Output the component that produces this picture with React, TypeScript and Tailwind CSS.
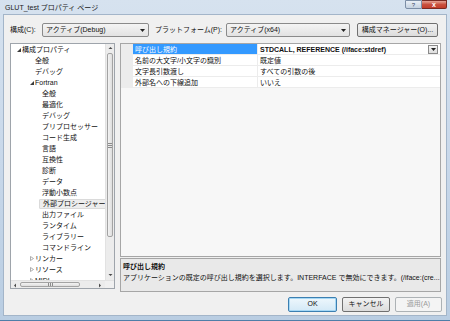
import React from 'react';

const font = "font-[family-name:'Liberation_Sans','Noto_Sans_CJK_JP',sans-serif]";

type Node = { l: number; t: string; a?: 'open' | 'closed'; sel?: boolean };

const tree: Node[] = [
  { l: 0, t: '構成プロパティ', a: 'open' },
  { l: 1, t: '全般' },
  { l: 1, t: 'デバッグ' },
  { l: 1, t: 'Fortran', a: 'open' },
  { l: 2, t: '全般' },
  { l: 2, t: '最適化' },
  { l: 2, t: 'デバッグ' },
  { l: 2, t: 'プリプロセッサー' },
  { l: 2, t: 'コード生成' },
  { l: 2, t: '言語' },
  { l: 2, t: '互換性' },
  { l: 2, t: '診断' },
  { l: 2, t: 'データ' },
  { l: 2, t: '浮動小数点' },
  { l: 2, t: '外部プロシージャー', sel: true },
  { l: 2, t: '出力ファイル' },
  { l: 2, t: 'ランタイム' },
  { l: 2, t: 'ライブラリー' },
  { l: 2, t: 'コマンドライン' },
  { l: 1, t: 'リンカー', a: 'closed' },
  { l: 1, t: 'リソース', a: 'closed' },
  { l: 1, t: 'MIDL', a: 'closed' },
];

const indent = ['pl-[6px]', 'pl-[19px]', 'pl-[31px]'];

const props = [
  { name: '呼び出し規約', value: 'STDCALL, REFERENCE (/iface:stdref)', active: true },
  { name: '名前の大文字/小文字の識別', value: '既定値' },
  { name: '文字長引数渡し', value: 'すべての引数の後' },
  { name: '外部名への下線追加', value: 'いいえ' },
];

const Arrow = ({ kind }: { kind?: 'open' | 'closed' }) => (
  <span className="w-[5px] h-[5px] shrink-0 flex items-center">
    {kind === 'open' && (
      <svg width="4" height="4" viewBox="0 0 4 4">
        <polygon points="4,0 4,4 0,4" fill="#3c3c3c" />
      </svg>
    )}
    {kind === 'closed' && (
      <svg width="4" height="5" viewBox="0 0 4 5">
        <polygon points="0.5,0.5 3.5,2.5 0.5,4.5" fill="none" stroke="#9a9a9a" strokeWidth="0.8" />
      </svg>
    )}
  </span>
);

const Caret = () => (
  <svg width="5" height="3" viewBox="0 0 5 3">
    <polygon points="0,0 5,0 2.5,3" fill="#222" />
  </svg>
);

const Combo = ({ text, w }: { text: string; w: string }) => (
  <div className={`${w} h-[14px] flex items-center justify-between pl-[3px] pr-[3px] border border-[#8a8a8a] rounded-[2px] bg-gradient-to-b from-[#f4f4f4] to-[#e2e2e2]`}>
    <span>{text}</span>
    <Caret />
  </div>
);

const Grip = ({ vertical }: { vertical?: boolean }) => (
  <div className={`flex ${vertical ? 'flex-col gap-[1px]' : 'flex-row gap-[1px]'}`}>
    {[0, 1, 2].map((i) => (
      <div key={i} className={vertical ? 'w-[4px] h-[1px] bg-[#8c8c8c]' : 'w-[1px] h-[3px] bg-[#8c8c8c]'} />
    ))}
  </div>
);

const ScrollArrow = ({ dir }: { dir: 'up' | 'down' | 'left' | 'right' }) => {
  const pts = {
    up: '0.5,3 2.5,1 4.5,3',
    down: '0.5,1 2.5,3 4.5,1',
    left: '3,0.5 1,2.5 3,4.5',
    right: '1,0.5 3,2.5 1,4.5',
  }[dir];
  return (
    <div className="w-[9px] h-[9px] flex items-center justify-center">
      <svg width="5" height="5" viewBox="0 0 5 5">
        <polygon points={pts} fill="#4a4a4a" />
      </svg>
    </div>
  );
};

export default function App() {
  return (
    <div className={`w-[450px] h-[321px] flex flex-col overflow-hidden bg-gradient-to-b from-[#d6e2ef] via-[#c8d8ea] to-[#b9cde2] border-b border-[#4f7ea8] text-[7px] text-[#111] ${font}`}>
      {/* title bar */}
      <div className="h-[14px] flex items-start justify-between pl-[5px] pr-[3px]">
        <span className="leading-[15px] text-[#1a1a1a]">GLUT_test プロパティ ページ</span>
        <div className="flex">
          <div className="w-[17px] h-[9px] flex items-center justify-center border border-[#7c8ea6] rounded-bl-[2px] bg-gradient-to-b from-[#e9eff6] to-[#c4d1e0] text-[6px] leading-none text-[#34485e]">?</div>
          <div className="w-[25px] h-[9px] flex items-center justify-center border border-l-0 border-[#7a2a22] rounded-br-[2px] bg-gradient-to-b from-[#e4a295] via-[#c9503e] to-[#c23c2a] text-[7px] leading-none font-bold text-white">x</div>
        </div>
      </div>

      {/* client area */}
      <div className="flex-1 mx-[3px] mb-[4px] flex flex-col bg-[#f0f0f0] border border-[#a3b5c9] pl-[6px] pr-[4px]">
        <div className="h-[14px] mt-[8px] flex items-center">
          <span className="w-[32px]">構成(C):</span>
          <Combo text="アクティブ(Debug)" w="w-[107px]" />
          <span className="ml-[6px] w-[71px]">プラットフォーム(P):</span>
          <Combo text="アクティブ(x64)" w="w-[124px]" />
          <div className="ml-[7px] w-[81px] h-[14px] flex items-center justify-center border border-[#707070] rounded-[2px] bg-gradient-to-b from-[#f2f2f2] to-[#dcdcdc]">
            構成マネージャー(O)...
          </div>
        </div>

        <div className="mt-[6px] flex gap-[5px]">
          {/* tree */}
          <div className="w-[105px] h-[246px] flex flex-col border border-[#9ea4ab] bg-white">
            <div className="flex-1 flex min-h-0">
              <div className="flex-1 min-w-0 flex flex-col overflow-hidden">
                {tree.map((n, i) => (
                  <div key={i} className={`h-[11px] shrink-0 flex items-center leading-[11px] whitespace-nowrap overflow-hidden ${indent[n.l]}`}>
                    {n.l < 2 && <Arrow kind={n.a} />}
                    {n.sel ? (
                      <span className="-ml-[3px] pl-[3px] flex-1 h-[10px] bg-[#ededed] border border-[#dadada] rounded-[1px] leading-[8px] whitespace-nowrap">{n.t}</span>
                    ) : (
                      <span>{n.t}</span>
                    )}
                  </div>
                ))}
              </div>
              <div className="w-[9px] shrink-0 flex flex-col bg-[#ececec] border-l border-[#e2e2e2]">
                <ScrollArrow dir="up" />
                <div className="h-[184px] mx-[1px] flex items-center justify-center border border-[#a3a3a3] rounded-[2px] bg-gradient-to-r from-[#f3f3f3] to-[#dedede]">
                  <Grip vertical />
                </div>
                <div className="flex-1" />
                <ScrollArrow dir="down" />
              </div>
            </div>
            <div className="h-[8px] shrink-0 flex bg-[#ececec] border-t border-[#e2e2e2]">
              <div className="h-[8px] flex items-center"><ScrollArrow dir="left" /></div>
              <div className="w-[60px] my-[1px] flex items-center justify-center border border-[#a3a3a3] rounded-[2px] bg-gradient-to-b from-[#f3f3f3] to-[#dedede]">
                <Grip />
              </div>
              <div className="flex-1" />
              <div className="h-[8px] flex items-center"><ScrollArrow dir="right" /></div>
              <div className="w-[9px] bg-[#f0f0f0]" />
            </div>
          </div>

          {/* property grid + description */}
          <div className="w-[321px] flex flex-col gap-[1px]">
            <div className="h-[214px] border border-[#a6a6a6] bg-[#f7f7f7] flex flex-col">
              {props.map((p, i) => (
                <div key={i} className="h-[11px] flex leading-[11px]">
                  <div className="w-[12px] bg-[#ececec]" />
                  <div className={`w-[124px] pl-[2px] border-b border-[#ececec] ${p.active ? 'bg-[#3399ff] text-white' : 'bg-white'}`}>{p.name}</div>
                  <div className="flex-1 flex items-center justify-between pl-[2px] pr-[2px] bg-white border-l border-b border-[#ececec]">
                    <span className={p.active ? 'font-bold' : ''}>{p.value}</span>
                    {p.active && (
                      <div className="w-[10px] h-[9px] flex items-center justify-center border border-[#8a8a8a] bg-gradient-to-b from-[#f4f4f4] to-[#dedede]">
                        <Caret />
                      </div>
                    )}
                  </div>
                </div>
              ))}
            </div>
            <div className="h-[34px] border border-[#a6a6a6] bg-[#e9e9e9] pl-[2px] pt-[3px] flex flex-col">
              <span className="font-bold leading-[10px]">呼び出し規約</span>
              <span className="leading-[11px] whitespace-nowrap overflow-hidden">アプリケーションの既定の呼び出し規約を選択します。INTERFACE で無効にできます。(/iface:(cre...</span>
            </div>
          </div>
        </div>

        <div className="mt-[5px] flex justify-end gap-[5px]">
          <div className="w-[49px] h-[15px] flex items-center justify-center border border-[#3c7fb1] rounded-[2px] bg-gradient-to-b from-[#eef7fc] to-[#d3e9f7] shadow-[inset_0_0_0_1px_#a6d8f5]">OK</div>
          <div className="w-[48px] h-[15px] flex items-center justify-center border border-[#707070] rounded-[2px] bg-gradient-to-b from-[#f2f2f2] to-[#dcdcdc]">キャンセル</div>
          <div className="w-[47px] h-[15px] flex items-center justify-center border border-[#adb2b5] rounded-[2px] bg-[#f4f4f4] text-[#9a9a9a]">適用(A)</div>
        </div>
      </div>
    </div>
  );
}
